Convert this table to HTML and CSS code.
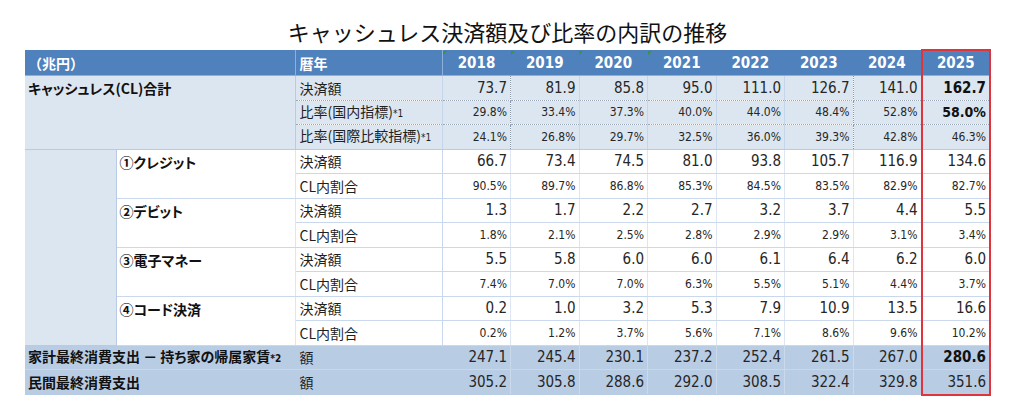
FILE: index.html
```html
<!DOCTYPE html>
<html lang="ja">
<head>
<meta charset="utf-8">
<title>キャッシュレス決済額及び比率の内訳の推移</title>
<link rel="stylesheet" href="styles.css">
</head>
<body>
<div class="page">
  <h1 class="title">キャッシュレス決済額及び比率の内訳の推移</h1>
  <table class="tbl">
    <colgroup>
      <col class="c1"><col class="c2"><col class="c3">
      <col class="cy"><col class="cy"><col class="cy"><col class="cy">
      <col class="cy"><col class="cy"><col class="cy"><col class="cy">
    </colgroup>
    <thead>
      <tr class="hdr">
        <th colspan="2" class="unit">（兆円）</th>
        <th class="lbl">暦年</th>
        <th class="yr mark">2018</th>
        <th class="yr mark">2019</th>
        <th class="yr mark">2020</th>
        <th class="yr mark">2021</th>
        <th class="yr">2022</th>
        <th class="yr">2023</th>
        <th class="yr">2024</th>
        <th class="yr hl">2025</th>
      </tr>
    </thead>
    <tbody>
      <tr class="tot">
        <td colspan="2" rowspan="3" class="grp">キャッシュレス(CL)合計</td>
        <td class="item">決済額</td>
        <td class="num dv">73.7</td><td class="num">81.9</td><td class="num">85.8</td><td class="num">95.0</td>
        <td class="num">111.0</td><td class="num dv">126.7</td><td class="num">141.0</td><td class="num hl b">162.7</td>
      </tr>
      <tr class="tot">
        <td class="item">比率(国内指標)<span class="note">*1</span></td>
        <td class="num pct dv">29.8%</td><td class="num pct">33.4%</td><td class="num pct">37.3%</td><td class="num pct">40.0%</td>
        <td class="num pct">44.0%</td><td class="num pct dv">48.4%</td><td class="num pct">52.8%</td><td class="num hl b big">58.0%</td>
      </tr>
      <tr class="tot last">
        <td class="item">比率(国際比較指標)<span class="note">*1</span></td>
        <td class="num pct dv">24.1%</td><td class="num pct">26.8%</td><td class="num pct">29.7%</td><td class="num pct">32.5%</td>
        <td class="num pct">36.0%</td><td class="num pct dv">39.3%</td><td class="num pct">42.8%</td><td class="num pct hl">46.3%</td>
      </tr>

      <tr class="sub">
        <td rowspan="8" class="side"></td>
        <td rowspan="2" class="grp2">①クレジット</td>
        <td class="item">決済額</td>
        <td class="num">66.7</td><td class="num">73.4</td><td class="num">74.5</td><td class="num">81.0</td>
        <td class="num">93.8</td><td class="num">105.7</td><td class="num">116.9</td><td class="num hl">134.6</td>
      </tr>
      <tr class="sub">
        <td class="item">CL内割合</td>
        <td class="num pct">90.5%</td><td class="num pct">89.7%</td><td class="num pct">86.8%</td><td class="num pct">85.3%</td>
        <td class="num pct">84.5%</td><td class="num pct">83.5%</td><td class="num pct">82.9%</td><td class="num pct hl">82.7%</td>
      </tr>
      <tr class="sub">
        <td rowspan="2" class="grp2">②デビット</td>
        <td class="item">決済額</td>
        <td class="num">1.3</td><td class="num">1.7</td><td class="num">2.2</td><td class="num">2.7</td>
        <td class="num">3.2</td><td class="num">3.7</td><td class="num">4.4</td><td class="num hl">5.5</td>
      </tr>
      <tr class="sub">
        <td class="item">CL内割合</td>
        <td class="num pct">1.8%</td><td class="num pct">2.1%</td><td class="num pct">2.5%</td><td class="num pct">2.8%</td>
        <td class="num pct">2.9%</td><td class="num pct">2.9%</td><td class="num pct">3.1%</td><td class="num pct hl">3.4%</td>
      </tr>
      <tr class="sub">
        <td rowspan="2" class="grp2">③電子マネー</td>
        <td class="item">決済額</td>
        <td class="num">5.5</td><td class="num">5.8</td><td class="num">6.0</td><td class="num">6.0</td>
        <td class="num">6.1</td><td class="num">6.4</td><td class="num">6.2</td><td class="num hl">6.0</td>
      </tr>
      <tr class="sub">
        <td class="item">CL内割合</td>
        <td class="num pct">7.4%</td><td class="num pct">7.0%</td><td class="num pct">7.0%</td><td class="num pct">6.3%</td>
        <td class="num pct">5.5%</td><td class="num pct">5.1%</td><td class="num pct">4.4%</td><td class="num pct hl">3.7%</td>
      </tr>
      <tr class="sub">
        <td rowspan="2" class="grp2">④コード決済</td>
        <td class="item">決済額</td>
        <td class="num">0.2</td><td class="num">1.0</td><td class="num">3.2</td><td class="num">5.3</td>
        <td class="num">7.9</td><td class="num">10.9</td><td class="num">13.5</td><td class="num hl">16.6</td>
      </tr>
      <tr class="sub">
        <td class="item">CL内割合</td>
        <td class="num pct">0.2%</td><td class="num pct">1.2%</td><td class="num pct">3.7%</td><td class="num pct">5.6%</td>
        <td class="num pct">7.1%</td><td class="num pct">8.6%</td><td class="num pct">9.6%</td><td class="num pct hl">10.2%</td>
      </tr>

      <tr class="foot">
        <td colspan="2" class="grp">家計最終消費支出 － 持ち家の帰属家賃<span class="note">*2</span></td>
        <td class="item">額</td>
        <td class="num">247.1</td><td class="num">245.4</td><td class="num">230.1</td><td class="num">237.2</td>
        <td class="num">252.4</td><td class="num">261.5</td><td class="num">267.0</td><td class="num hl b">280.6</td>
      </tr>
      <tr class="foot end">
        <td colspan="2" class="grp">民間最終消費支出</td>
        <td class="item">額</td>
        <td class="num">305.2</td><td class="num">305.8</td><td class="num">288.6</td><td class="num">292.0</td>
        <td class="num">308.5</td><td class="num">322.4</td><td class="num">329.8</td><td class="num hl">351.6</td>
      </tr>
    </tbody>
  </table>
</div>
</body>
</html>
```

FILE: styles.css
```css
html, body {
  margin: 0;
  padding: 0;
  background: #ffffff;
}

.page {
  width: 965px;
  margin-left: 25px;
  font-family: "Noto Sans CJK JP", sans-serif;
  color: #1a1a1a;
}

.title {
  margin: 16px 0 3px 0;
  font-size: 22px;
  line-height: 30px;
  font-weight: 400;
  text-align: center;
  color: #111;
}

.tbl {
  width: 965px;
  table-layout: fixed;
  border-collapse: collapse;
}

.c1 { width: 91px; }
.c2 { width: 179px; }
.c3 { width: 147px; }
.cy { width: 68.5px; }

.tbl th,
.tbl td {
  padding: 0;
  overflow: hidden;
  white-space: nowrap;
  line-height: 16px;
}

/* header */
.hdr th {
  height: 24px;
  background: #4f81bd;
  color: #ffffff;
  font-weight: 700;
  border-top: 1px solid #4f81bd;
  border-bottom: 1px solid #8db0da;
}

.hdr .unit {
  text-align: left;
  font-size: 14px;
  padding-left: 3px;
  border-right: 1px solid #8db0da;
}

.hdr .lbl {
  text-align: left;
  font-size: 14px;
  padding-left: 4px;
  border-right: 1px solid #8db0da;
}

.hdr .yr {
  font-family: "DejaVu Sans Condensed", "DejaVu Sans", sans-serif;
  font-stretch: condensed;
  font-size: 15px;
  text-align: center;
  position: relative;
}

.hdr .mark::before {
  content: "";
  position: absolute;
  left: 0;
  top: 0;
  border-top: 4px solid #2e9a3a;
  border-right: 4px solid transparent;
}

/* body rows */
.tot td, .sub td, .foot td {
  height: 23.5px;
}

.item {
  font-size: 14px;
  padding-left: 4px !important;
  color: #1f1f1f;
}

.note {
  font-family: "DejaVu Sans Condensed", "DejaVu Sans", sans-serif;
  font-size: 10px;
}

.num {
  font-family: "DejaVu Sans Condensed", "DejaVu Sans", sans-serif;
  font-stretch: condensed;
  font-size: 15px;
  text-align: right;
  padding-right: 3px !important;
  color: #262626;
}

.num.pct {
  font-size: 12px;
}

.num.b {
  font-weight: 700;
  color: #111;
}

.num.big {
  font-size: 14px;
}

.grp,
.grp2 {
  vertical-align: top;
  text-align: left;
  font-weight: 700;
  font-size: 14px;
  padding-left: 3px !important;
  padding-top: 4px !important;
  color: #111;
  font-feature-settings: "palt";
}

.foot .grp {
  vertical-align: middle;
  padding-top: 0 !important;
}

.grp2 {
  background: #ffffff;
  border: 1px solid #b9cbe3;
}

/* CL total block */
.tot td {
  background: #dce6f1;
  border-bottom: 1px dotted #9aa7b8;
  border-right: 1px solid #c5d5ea;
}

.tot td.grp {
  border-bottom: 1px solid #b9cbe3;
  border-right: 1px solid #b9cbe3;
}

.tot.last td {
  border-bottom: 1px solid #b9cbe3;
}

.tot td.dv {
  border-right: 1px dotted #8a96a6;
}

/* breakdown block */
.sub td {
  background: #ffffff;
  border-bottom: 1px solid #c9d8ec;
  border-right: 1px solid #dde6f2;
}

.sub td.item {
  border-left: 1px solid #b9cbe3;
  border-right: 1px solid #c9d8ec;
}

.sub td.side {
  background: #dce6f1;
  border-right: 1px solid #b9cbe3;
  border-bottom: 1px solid #b9cbe3;
}

/* totals at bottom */
.foot td {
  background: #b8cce4;
  border-right: 1px solid #cad9eb;
  border-bottom: 1px solid #c8d7ea;
}

.foot td.grp {
  border-right: 1px solid #b8cce4;
}

.foot td.item {
  border-left: 1px solid #b8cce4;
  border-right: 1px solid #b8cce4;
}

.foot.end td {
  border-bottom: 1px solid #b8cce4;
}

/* highlighted 2025 column */
.tbl .hl {
  border-left: 2px solid #e0343c;
  border-right: 2px solid #e0343c;
}

.hdr th.hl {
  border-top: 2px solid #e0343c;
}

.foot.end td.hl {
  border-bottom: 2px solid #e0343c;
}
```
